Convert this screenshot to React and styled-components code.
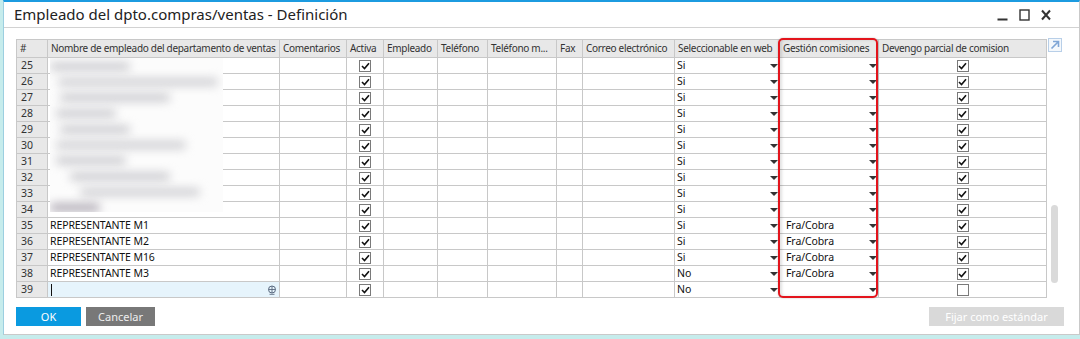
import React from 'react';
import styled, { createGlobalStyle } from 'styled-components';

const Global = createGlobalStyle`
  html, body { margin: 0; padding: 0; background: #c6ecec; }
  body { font-family: "Noto Sans", "Liberation Sans", sans-serif; color: #111; }
  * { box-sizing: border-box; }
`;

const Window = styled.div`
  margin-left: 3px;
  width: 1077px;
  height: 335px;
  background: #fff;
  border-top: 2px solid #1c9be0;
  border-left: 1px solid #9ccfe0;
  border-right: 1px solid #c9c9c9;
  border-bottom: 1px solid #c9c9c9;
  display: flex;
  flex-direction: column;
`;

const TitleBar = styled.div`
  height: 26px;
  border-bottom: 1px solid #d2d2d2;
  display: flex;
  align-items: center;
  justify-content: space-between;
  padding: 0 28px 0 10px;
`;

const Title = styled.div`
  font-size: 15px;
  color: #222;
  margin-top: -1px;
`;

const Controls = styled.div`
  display: flex;
  align-items: center;
  gap: 11px;
`;

const Main = styled.div`
  padding: 11px 0 0 12px;
  display: flex;
`;

const GridWrap = styled.div`
  position: relative;
  width: 1031px;
`;

const Grid = styled.div`
  display: grid;
  grid-template-columns: 31px 232px 67px 37px 54px 50px 69px 26px 92px 105px 99px 168px;
  border-left: 1px solid #c8c8c8;
  border-top: 1px solid #c8c8c8;
  font-family: "Noto Sans", sans-serif;
  font-size: 10.5px;
`;

const HeadCell = styled.div`
  height: 18px;
  background: #e8e8e8;
  border-right: 1px solid #c8c8c8;
  border-bottom: 1px solid #c8c8c8;
  color: #333;
  padding: 0 3px;
  font-size: 10px;
  letter-spacing: -0.3px;
  line-height: 17px;
  white-space: nowrap;
  overflow: hidden;
`;

const Cell = styled.div`
  height: 16px;
  border-right: 1px solid #c8c8c8;
  border-bottom: 1px solid #c8c8c8;
  background: ${p => (p.$num ? '#e8e8e8' : p.$sel ? '#e6f4fc' : '#fff')};
  padding: 0 ${p => (p.$num ? '4px' : '2px')};
  line-height: 15px;
  letter-spacing: -0.1px;
  white-space: nowrap;
  overflow: hidden;
  display: flex;
  align-items: center;
  justify-content: ${p => (p.$center ? 'center' : p.$split ? 'space-between' : 'flex-start')};
  color: ${p => (p.$num ? '#333' : '#111')};
`;

const Box = styled.div`
  width: 12px;
  height: 12px;
  border: 1px solid #7a7a7a;
  background: #fff;
  display: flex;
  align-items: center;
  justify-content: center;
`;

const Tri = styled.span`
  width: 0;
  height: 0;
  border-left: 4px solid transparent;
  border-right: 4px solid transparent;
  border-top: 4px solid #333;
  margin-right: -1px;
`;

const DropText = styled.span`
  padding-left: ${p => (p.$inset ? '4px' : '0')};
`;

const Caret = styled.span`
  width: 1px;
  height: 12px;
  background: #111;
  margin-left: 1px;
`;

const SelInner = styled.div`
  flex: 1;
  display: flex;
  align-items: center;
  justify-content: space-between;
`;

const Blur = styled.div`
  position: absolute;
  left: 34px;
  top: 19px;
  width: 173px;
  height: 154px;
  background: #fcfcfc;
  overflow: hidden;
  padding: 4px 0 0 0;
  display: flex;
  flex-direction: column;
  gap: 7px;
`;

const Smudge = styled.div`
  height: 9px;
  width: ${p => p.$w}px;
  margin-left: ${p => p.$m || 0}px;
  background: ${p => p.$c || '#cfcfd3'};
  filter: blur(5px);
  border-radius: 4px;
`;

const Highlight = styled.div`
  position: absolute;
  left: 762px;
  top: -1px;
  width: 100px;
  height: 260px;
  border: 2px solid #e3141c;
  border-radius: 5px;
  box-shadow: 0 0 2px rgba(0, 0, 0, 0.25), inset 2px 0 3px rgba(0, 0, 0, 0.12);
  pointer-events: none;
`;

const Side = styled.div`
  width: 14px;
  margin-left: 1px;
  display: flex;
  flex-direction: column;
  margin-top: -1px;
`;

const Thumb = styled.div`
  width: 7px;
  height: 78px;
  margin: 153px 0 0 3px;
  background: #dadada;
  border-radius: 4px;
`;

const Footer = styled.div`
  display: flex;
  align-items: center;
  padding: 9px 15px 0 12px;
  gap: 5px;
`;

const Button = styled.div`
  height: 19px;
  width: ${p => p.$w}px;
  background: ${p => p.$bg};
  color: ${p => p.$fg || '#fff'};
  font-size: 11px;
  display: flex;
  align-items: center;
  justify-content: center;
  margin-left: ${p => (p.$push ? 'auto' : '0')};
`;

const Check = () => (
  <svg width="9" height="8" viewBox="0 0 9 8">
    <path d="M1 4 L3.5 6.5 L8 1.2" fill="none" stroke="#111" strokeWidth="1.6" />
  </svg>
);

const CheckCell = ({ on }) => (
  <Cell $center>
    <Box>{on && <Check />}</Box>
  </Cell>
);

const DropCell = ({ v, inset }) => (
  <Cell $split>
    <DropText $inset={inset}>{v}</DropText>
    <Tri />
  </Cell>
);

const heads = [
  '#',
  'Nombre de empleado del departamento de ventas',
  'Comentarios',
  'Activa',
  'Empleado',
  'Teléfono',
  'Teléfono m...',
  'Fax',
  'Correo electrónico',
  'Seleccionable en web',
  'Gestión comisiones',
  'Devengo parcial de comision',
];

const rows = [];
for (let n = 25; n <= 34; n++) rows.push({ n, name: '', web: 'Si', gest: '', dev: true });
rows.push({ n: 35, name: 'REPRESENTANTE M1', web: 'Si', gest: 'Fra/Cobra', dev: true });
rows.push({ n: 36, name: 'REPRESENTANTE M2', web: 'Si', gest: 'Fra/Cobra', dev: true });
rows.push({ n: 37, name: 'REPRESENTANTE M16', web: 'Si', gest: 'Fra/Cobra', dev: true });
rows.push({ n: 38, name: 'REPRESENTANTE M3', web: 'No', gest: 'Fra/Cobra', dev: true });
rows.push({ n: 39, name: '', web: 'No', gest: '', dev: false, sel: true });

const smudges = [
  [80, 0], [160, 8], [110, 10], [60, 6], [70, 10], [130, 6], [70, 6], [100, 20], [120, 30], [50, 0, '#b7b2bb'],
];

const Lookup = () => (
  <svg width="10" height="10" viewBox="0 0 10 10">
    <circle cx="5" cy="4.5" r="3.5" fill="none" stroke="#5a6a80" strokeWidth="1" />
    <path d="M1.5 4.5 H8.5 M5 1 V8 M2.5 9.3 H7.5" stroke="#5a6a80" strokeWidth="0.9" fill="none" />
  </svg>
);

export default function App() {
  return (
    <>
      <Global />
      <Window>
        <TitleBar>
          <Title>Empleado del dpto.compras/ventas - Definición</Title>
          <Controls>
            <svg width="11" height="12" viewBox="0 0 11 12">
              <rect x="0.5" y="9.5" width="10" height="2" fill="#333" />
            </svg>
            <svg width="11" height="12" viewBox="0 0 11 12">
              <rect x="1" y="1" width="9" height="10" fill="none" stroke="#333" strokeWidth="1.4" />
            </svg>
            <svg width="10" height="12" viewBox="0 0 10 12">
              <path d="M1 1.5 L9 10.5 M9 1.5 L1 10.5" stroke="#333" strokeWidth="2" />
            </svg>
          </Controls>
        </TitleBar>
        <Main>
          <GridWrap>
            <Grid>
              {heads.map(h => (
                <HeadCell key={h}>{h}</HeadCell>
              ))}
              {rows.map(r => (
                <React.Fragment key={r.n}>
                  <Cell $num>{r.n}</Cell>
                  <Cell $sel={r.sel}>
                    {r.sel ? (
                      <SelInner>
                        <Caret />
                        <Lookup />
                      </SelInner>
                    ) : (
                      r.name
                    )}
                  </Cell>
                  <Cell />
                  <CheckCell on />
                  <Cell />
                  <Cell />
                  <Cell />
                  <Cell />
                  <Cell />
                  <DropCell v={r.web} />
                  <DropCell v={r.gest} inset />
                  <CheckCell on={r.dev} />
                </React.Fragment>
              ))}
            </Grid>
            <Blur>
              {smudges.map(([w, m, c], i) => (
                <Smudge key={i} $w={w} $m={m} $c={c} />
              ))}
            </Blur>
            <Highlight />
          </GridWrap>
          <Side>
            <svg width="14" height="14" viewBox="0 0 14 14">
              <rect x="0.5" y="0.5" width="13" height="13" fill="#f4f8fc" stroke="#b8cfe8" />
              <path d="M3.5 10.5 L10 4 M5 3.5 H10.5 V9" fill="none" stroke="#7fa6d6" strokeWidth="1.6" />
            </svg>
            <Thumb />
          </Side>
        </Main>
        <Footer>
          <Button $w={65} $bg="#0a9ae0">OK</Button>
          <Button $w={69} $bg="#787878" $fg="#eee">Cancelar</Button>
          <Button $w={135} $bg="#d9d9d9" $push>Fijar como estándar</Button>
        </Footer>
      </Window>
    </>
  );
}
